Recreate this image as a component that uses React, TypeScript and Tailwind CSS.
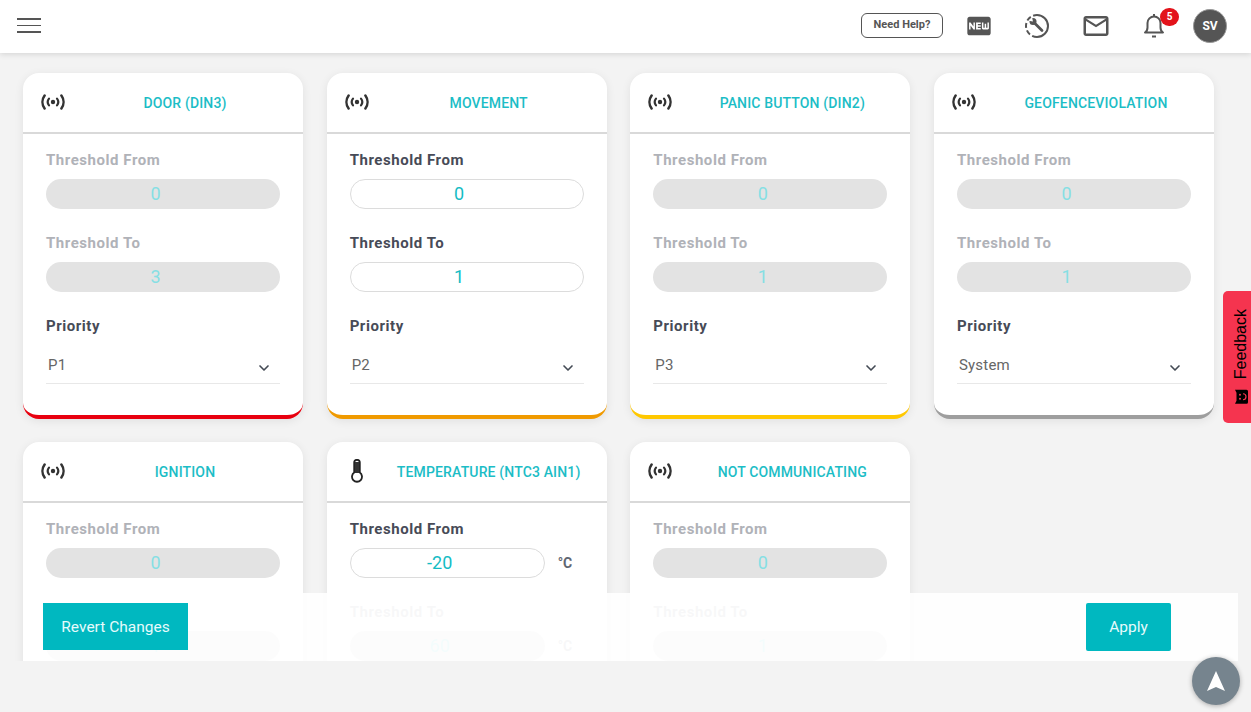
import React from 'react';
import { ChevronDown } from 'lucide-react';
import { MdFiberNew, MdMailOutline } from 'react-icons/md';

type CardData = {
  title: string;
  from: string;
  to: string;
  priority?: string;
  accent?: string;
  disabled: boolean;
  temperature?: boolean;
};

const cards: CardData[] = [
  { title: 'DOOR (DIN3)', from: '0', to: '3', priority: 'P1', accent: 'border-b-[#e8000f]', disabled: true },
  { title: 'MOVEMENT', from: '0', to: '1', priority: 'P2', accent: 'border-b-[#f09a00]', disabled: false },
  { title: 'PANIC BUTTON (DIN2)', from: '0', to: '1', priority: 'P3', accent: 'border-b-[#ffc800]', disabled: true },
  { title: 'GEOFENCEVIOLATION', from: '0', to: '1', priority: 'System', accent: 'border-b-[#9e9e9e]', disabled: true },
  { title: 'IGNITION', from: '0', to: '1', disabled: true },
  { title: 'TEMPERATURE (NTC3 AIN1)', from: '-20', to: '60', disabled: false, temperature: true },
  { title: 'NOT COMMUNICATING', from: '0', to: '1', disabled: true },
];

function SignalIcon() {
  return (
    <svg width="24" height="16" viewBox="0 0 24 16" fill="none" stroke="#333" strokeWidth="2.2" strokeLinecap="round">
      <circle cx="12" cy="8" r="2.2" fill="#333" stroke="none" />
      <path d="M8 4.6a5.5 5.5 0 0 0 0 6.8" />
      <path d="M16 4.6a5.5 5.5 0 0 1 0 6.8" />
      <path d="M3.6 1.5a11 11 0 0 0 0 13" strokeWidth="2.5" />
      <path d="M20.4 1.5a11 11 0 0 1 0 13" strokeWidth="2.5" />
    </svg>
  );
}

function ThermometerIcon() {
  return (
    <svg width="14" height="24" viewBox="0 0 14 24" fill="none">
      <path d="M4.2 13.6V3.6a2.8 2.8 0 0 1 5.6 0v10a5 5 0 1 1-5.6 0Z" stroke="#222" strokeWidth="1.8" />
      <path d="M5 3h4v11H5Z" fill="#333" />
      <circle cx="7" cy="18" r="2.8" fill="#fff" />
    </svg>
  );
}

function ServiceIcon() {
  return (
    <svg width="26" height="26" viewBox="0 0 26 26" fill="none" stroke="#555">
      <path d="M13 2a11 11 0 0 1 0 22" strokeWidth="2" />
      <path d="M13 24a11 11 0 0 1 0-22" strokeWidth="2" strokeDasharray="5 2.6" />
      <path d="M10 9.5 18 17.5" strokeWidth="2.8" strokeLinecap="round" />
      <circle cx="9" cy="8.5" r="3.5" fill="#555" stroke="none" />
      <path d="M9 8.5 4.5 7.8 8 4.2Z" fill="#fff" stroke="none" />
    </svg>
  );
}

function BellIcon() {
  return (
    <svg width="28" height="28" viewBox="0 0 28 28" fill="none" stroke="#555" strokeWidth="2">
      <path d="M14 2v2.5" />
      <path d="M5 20.5c1.5-1 2.5-2.5 2.5-5V11a6.5 6.5 0 0 1 13 0v4.5c0 2.5 1 4 2.5 5Z" strokeLinejoin="round" />
      <path d="M12 24.5h4" />
    </svg>
  );
}

function ValueBox({ value, disabled, unit }: { value: string; disabled: boolean; unit: boolean }) {
  return (
    <div className="flex items-center">
      <div
        className={`h-[30px] rounded-full flex items-center justify-center pr-[15px] pb-[1px] text-[18px] ${unit ? 'w-[195px]' : 'w-[234px]'} ${
          disabled ? 'bg-[#e3e3e3] text-[#86dfe4]' : 'bg-white border border-[#dcdcdc] text-[#14bcc4]'
        }`}
      >
        {value}
      </div>
      {unit && <span className={`ml-[13px] text-[14px] font-bold ${disabled ? 'text-[#b0b2b8]' : 'text-[#5f6672]'}`}>°C</span>}
    </div>
  );
}

function Card({ data }: { data: CardData }) {
  const labelColor = data.disabled ? 'text-[#b0b2b8]' : 'text-[#474b57]';
  return (
    <div className={`w-[280px] bg-white rounded-2xl shadow-[0_2px_10px_rgba(0,0,0,0.08)] border-b-4 ${data.accent ?? 'border-b-transparent'}`}>
      <div className="h-[61px] flex items-center border-b-2 border-[#d9d9d9]">
        <div className="w-[44px] pl-[18px] flex shrink-0">
          {data.temperature ? (
            <div className="pl-[5px] mt-[-1px]">
              <ThermometerIcon />
            </div>
          ) : (
            <div className="mt-[-1px]">
              <SignalIcon />
            </div>
          )}
        </div>
        <div className="flex-1 text-center text-[14px] font-medium tracking-[0.15px] text-[#1cbdc6] leading-none whitespace-nowrap">{data.title}</div>
      </div>
      <div className="px-[23px] pt-[17px] pb-[31px]">
        <div className={`text-[15px] font-bold tracking-[0.55px] leading-[18px] mb-[10px] ${labelColor}`}>Threshold From</div>
        <ValueBox value={data.from} disabled={data.disabled && !data.temperature} unit={!!data.temperature} />
        <div className={`text-[15px] font-bold tracking-[0.55px] leading-[18px] mt-[25px] mb-[10px] ${data.temperature ? 'text-[#b0b2b8]' : labelColor}`}>Threshold To</div>
        <ValueBox value={data.to} disabled={data.disabled || !!data.temperature} unit={!!data.temperature} />
        <div className="text-[15px] font-bold tracking-[0.55px] leading-[18px] mt-[25px] text-[#474b57]">Priority</div>
        <div className="mt-[10px] h-[39px] pl-[2px] pr-[8px] flex justify-between border-b border-[#e8e8e8] text-[15px] tracking-[0.2px] text-[#666]">
          <span className="pt-[9px]">{data.priority}</span>
          <ChevronDown size={16} strokeWidth={2.5} className="text-[#444b55] mt-[15px]" />
        </div>
      </div>
    </div>
  );
}

export default function App() {
  return (
    <div className="relative h-screen overflow-hidden bg-[#f3f3f3] font-['Roboto',sans-serif]">
      {/* Top bar */}
      <header className="relative z-10 h-[53px] bg-white shadow-[0_1px_6px_rgba(0,0,0,0.14)] flex items-center pl-[17px] pr-[24px] pb-[2px]">
        <div className="flex flex-col gap-[5px] w-[24px]">
          <div className="h-[2px] bg-[#555]" />
          <div className="h-[1.5px] bg-[#555]" />
          <div className="h-[2px] bg-[#555]" />
        </div>
        <div className="flex-1" />
        <div className="w-[82px] h-[25px] border-[1.5px] border-[#555] rounded-[6px] flex items-center justify-center text-[11px] font-bold text-[#555]">
          Need Help?
        </div>
        <MdFiberNew size={28} className="ml-[22px] text-[#555]" />
        <div className="ml-[31px] flex">
          <ServiceIcon />
        </div>
        <MdMailOutline size={30} className="ml-[31px] mr-[29px] text-[#555]" />
        <div className="relative flex">
          <BellIcon />
          <div className="absolute left-[20px] top-[-4px] w-[19px] h-[18px] rounded-full bg-[#e3131b] text-white text-[10px] font-bold flex items-center justify-center">
            5
          </div>
        </div>
        <div className="ml-[25px] w-[34px] h-[34px] rounded-full bg-[#555] border border-[#999] text-white text-[12px] font-bold flex items-center justify-center">
          SV
        </div>
      </header>

      {/* Cards */}
      <main className="relative h-[608px] overflow-hidden pt-[20px] pl-[23px]">
        <div className="grid grid-cols-[repeat(4,280px)] gap-x-[23.67px] gap-y-[23px]">
          {cards.map((c) => (
            <Card key={c.title} data={c} />
          ))}
        </div>
        {/* Footer actions */}
        <div className="absolute left-[23px] top-[540px] w-[1215px] h-[68px] bg-white/90 flex justify-between items-start pt-[10px] pl-[20px] pr-[67px]">
          <button className="w-[145px] h-[47px] pt-[2px] bg-[#00b8c0] text-[#e6fbfc] text-[15.5px]">Revert Changes</button>
          <button className="w-[85px] h-[48px] pt-[2px] rounded-[2px] bg-[#00b8c0] text-[#e6fbfc] text-[15.5px]">Apply</button>
        </div>
      </main>

      {/* Feedback tab */}
      <div className="absolute right-0 top-[291px] w-[28px] h-[132px] bg-[#f5344f] rounded-l-[5px] flex items-center justify-center pl-[8px]">
        <div className="[writing-mode:vertical-rl] rotate-180 flex items-center gap-[10px] text-[16px] text-black font-['Liberation_Sans',sans-serif]">
          <svg width="16" height="15" viewBox="0 0 16 15" className="rotate-90">
            <path d="M1 1.5 4 3h8l3-1.5V13a1.5 1.5 0 0 1-1.5 1.5h-11A1.5 1.5 0 0 1 1 13Z" fill="#000" />
            <circle cx="6" cy="6.5" r="1" fill="#f5344f" />
            <circle cx="10" cy="6.5" r="1" fill="#f5344f" />
            <path d="M5 9.5a3 3 0 0 0 6 0" fill="none" stroke="#f5344f" strokeWidth="1.2" />
          </svg>
          <span>Feedback</span>
        </div>
      </div>

      {/* Scroll to top */}
      <div className="absolute left-[1192px] top-[657px] w-[48px] h-[48px] rounded-full bg-[#76848e] shadow-[0_1px_5px_rgba(0,0,0,0.3)] flex items-center justify-center">
        <svg width="18" height="20" viewBox="0 0 18 20">
          <path d="M9 0 18 20 9 16 0 20Z" fill="#fff" />
        </svg>
      </div>
    </div>
  );
}
